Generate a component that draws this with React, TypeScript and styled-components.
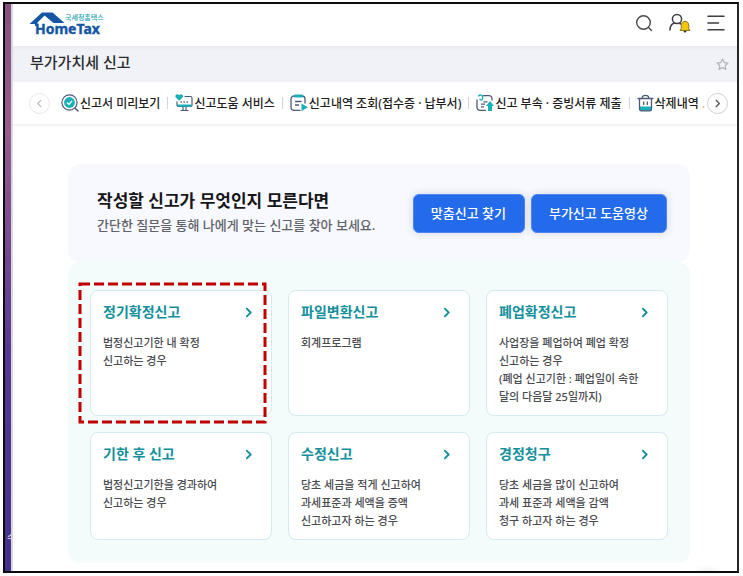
import React from "react";
import styled, { createGlobalStyle } from "styled-components";

const GlobalStyle = createGlobalStyle`
  *, *::before, *::after { box-sizing: border-box; }
  body {
    margin: 0;
    background: #fff;
    color: #222;
    font-family: "Noto Sans", "Noto Sans CJK KR", sans-serif;
  }
  h1, h2, h3, p, ul { margin: 0; padding: 0; }
  ul { list-style: none; }
  button { font-family: inherit; cursor: pointer; }
`;

const Page = styled.div`
  display: flex;
  min-height: 100vh;
  padding: 2px 4px 3px 3px;
`;

const Frame = styled.div`
  flex: 1;
  min-width: 0;
  display: flex;
  border: 2px solid #0c0c0e;
  border-right-color: #26272b;
`;

const Desktop = styled.div`
  position: relative;
  flex: none;
  width: 6px;
  overflow: hidden;
  background: linear-gradient(#86507f, #965c8c 22%, #724990 45%, #573795 62%, #43308a);
`;

const DesktopLabel = styled.span`
  position: absolute;
  left: 2px;
  bottom: 26px;
  font-size: 10px;
  line-height: 16px;
  color: #e4e0ee;
  white-space: nowrap;
`;

const Window = styled.div`
  position: relative;
  flex: 1;
  min-width: 0;
  border-left: 2px solid #d9d6df;
  background: #fff;
  overflow: hidden;
`;

const Header = styled.header`
  display: flex;
  align-items: center;
  justify-content: space-between;
  height: 42px;
  padding: 0 12px 4px 16px;
`;

const LogoLink = styled.a`
  display: block;
  height: 30px;
  text-decoration: none;
`;

const HeaderTools = styled.div`
  display: flex;
  align-items: center;
  gap: 16px;
`;

const IconButton = styled.button`
  display: flex;
  padding: 0;
  border: 0;
  background: none;
`;

const TitleBar = styled.div`
  display: flex;
  align-items: center;
  justify-content: space-between;
  height: 36px;
  padding: 0 8px 0 17px;
  background: linear-gradient(#e9ebf0, #f0f2f7 5px);
`;

const PageTitle = styled.h1`
  font-size: 15px;
  line-height: 22px;
  font-weight: 500;
  padding-bottom: 4px;
  color: #2a2a2e;
`;

const QuickNav = styled.nav`
  display: flex;
  align-items: center;
  height: 44px;
  padding: 0 9px 0 16px;
  border-bottom: 2px solid #f3f3f5;
`;

const RoundButton = styled.button<{ $muted?: boolean }>`
  flex: none;
  display: flex;
  align-items: center;
  justify-content: center;
  width: 21px;
  height: 21px;
  padding: 0;
  border-radius: 50%;
  border: 1px solid ${(p) => (p.$muted ? "#e8e8ea" : "#cfcfd3")};
  background: #fff;
  color: ${(p) => (p.$muted ? "#b9b9bd" : "#55555a")};
`;

const QuickList = styled.ul`
  flex: 1;
  min-width: 0;
  display: flex;
  overflow: hidden;
  padding-left: 11px;
`;

const QuickItem = styled.li`
  flex: none;
  display: flex;
  align-items: center;

  & + &::before {
    content: "";
    width: 1px;
    height: 12px;
    margin: 0 7px;
    background: #d4d4d8;
  }
`;

const QuickLink = styled.a`
  display: flex;
  align-items: center;
  gap: 1px;
  font-size: 12px;
  line-height: 20px;
  font-weight: 500;
  color: #1d1d20;
  text-decoration: none;
  white-space: nowrap;
`;

const QuickLabel = styled.span`
  padding-top: 2px;
`;

const Dot = styled.span`
  color: #f0b888;
`;

const Main = styled.main`
  padding: 38px 47px 8px 55px;
`;

const Banner = styled.section`
  display: flex;
  align-items: center;
  justify-content: space-between;
  min-height: 98px;
  padding: 0 23px 0 29px;
  border-radius: 12px;
  background: #f7f9ff;
`;

const BannerTitle = styled.h2`
  font-size: 17px;
  line-height: 24px;
  font-weight: 700;
  color: #17171a;
  white-space: nowrap;
`;

const BannerText = styled.p`
  font-size: 13px;
  line-height: 24px;
  font-weight: 500;
  color: #626368;
  white-space: nowrap;
`;

const BannerActions = styled.div`
  display: flex;
  gap: 6px;
`;

const PrimaryButton = styled.button`
  height: 39px;
  padding: 0 18px 2px 17px;
  border: 1px solid #4f85f0;
  border-radius: 6px;
  background: #246beb;
  box-shadow: 0 0 8px rgba(30, 40, 80, 0.16);
  color: #fff;
  font-size: 13px;
  font-weight: 500;
  white-space: nowrap;
`;

const Cards = styled.section`
  display: grid;
  grid-template-columns: repeat(3, minmax(0, 1fr));
  gap: 16px;
  padding: 28px 22px 23px;
  border-radius: 12px;
  background: #f3fbfb;
`;

const Card = styled.a`
  position: relative;
  display: block;
  padding: 11px 12px 9px;
  border: 1px solid #d3ebed;
  border-radius: 8px;
  background: #fff;
  text-decoration: none;
`;

const CardHead = styled.div`
  display: flex;
  align-items: center;
  justify-content: space-between;
  padding-right: 5px;
  margin-bottom: 12px;
  color: #13909c;
`;

const CardTitle = styled.h3`
  font-size: 14px;
  line-height: 20px;
  font-weight: 700;
`;

const CardText = styled.p`
  font-size: 11px;
  line-height: 18px;
  font-weight: 500;
  color: #4a4b50;
  white-space: pre-line;
`;

const Highlight = styled.span`
  position: absolute;
  inset: -7px 6px -7px -11px;

  svg {
    display: block;
    width: 100%;
    height: 100%;
    overflow: visible;
  }
`;

const FloatingShade = styled.div`
  position: absolute;
  right: 18px;
  bottom: -22px;
  width: 24px;
  height: 20px;
  border-radius: 50%;
  box-shadow: 0 0 8px rgba(0, 0, 0, 0.3);
`;

const Logo = () => (
  <svg width="78" height="30" viewBox="0 -1 78 30" role="img" aria-label="국세청홈택스 HomeTax">
    <path d="M0.500 15 13 3.500H23.500L35.500 14H24.500L15.500 6.500 8.500 13.500V17H6V15Z" fill="#1455a4" />
    <text x="36" y="11" fontSize="7" fontWeight="500" fill="#18a2b0" fontFamily="Noto Sans CJK KR, sans-serif">국세청홈택스</text>
    <text x="6" y="25" fontSize="14" fontWeight="700" fill="#1455a4" stroke="#1455a4" strokeWidth="0.400" fontFamily="Noto Sans, sans-serif">HomeTax</text>
  </svg>
);

const SearchIcon = () => (
  <svg width="18" height="18" viewBox="0 0 18 18" fill="none" stroke="#4a4a4e" strokeWidth="1.4" strokeLinecap="round">
    <circle cx="8.500" cy="8.500" r="6.800" />
    <path d="m13.500 13.500 3 3" />
  </svg>
);

const UserBellIcon = () => (
  <svg width="22" height="20" viewBox="0 0 22 20" fill="none">
    <circle cx="8" cy="6" r="4.600" stroke="#3d3d42" strokeWidth="1.500" />
    <path d="M1 17c0-3.800 1.800-6.200 4.500-7" stroke="#3d3d42" strokeWidth="1.500" strokeLinecap="round" />
    <path d="M10.500 10.500 12 11" stroke="#3d3d42" strokeWidth="1.500" />
    <path d="M16 8.300c-2.600 0-3.800 1.900-3.800 4.200v3.200L11 17.500h10l-1.200-1.800v-3.200c0-2.300-1.200-4.200-3.800-4.200Z" fill="#f5c50a" stroke="#6d5a14" strokeWidth="0.800" />
    <path d="M14.500 18h3a1.500 1.500 0 0 1-3 0Z" fill="#3d3520" />
  </svg>
);

const MenuIcon = () => (
  <svg width="18" height="16" viewBox="0 0 18 16" stroke="#3d3d42" strokeWidth="1.500" strokeLinecap="round">
    <path d="M1 1.200h16M1 8h10.500M1 14.800h16" />
  </svg>
);

const StarIcon = () => (
  <svg width="13" height="13" viewBox="0 0 24 24" fill="none" stroke="#b4b6bc" strokeWidth="2.400" strokeLinejoin="round">
    <path d="m12 2 3.100 6.300 6.900 1-5 4.900 1.200 6.900L12 17.800l-6.200 3.300L7 14.200 2 9.300l6.900-1Z" />
  </svg>
);

const Chevron = ({ size = 10, width = 1.6, left = false }: { size?: number; width?: number; left?: boolean }) => (
  <svg width={size} height={size} viewBox="0 0 10 10" fill="none" stroke="currentColor" strokeWidth={width} strokeLinecap="round" strokeLinejoin="round" aria-hidden="true">
    <path d={left ? "M6.500 1.500 3 5l3.500 3.500" : "M3.500 1.500 7 5 3.500 8.500"} />
  </svg>
);

const PreviewIcon = () => (
  <svg width="18" height="18" viewBox="0 0 18 18" fill="none" aria-hidden="true">
    <circle cx="8.500" cy="8.500" r="7.600" stroke="#505a78" strokeWidth="1.200" />
    <circle cx="8.500" cy="8.500" r="5.400" fill="#19b0ba" />
    <path d="m6 8.500 1.900 1.900 3.300-3.500" stroke="#fff" strokeWidth="1.300" />
    <path d="m14.200 14.200 2.800 2.800" stroke="#505a78" strokeWidth="1.600" strokeLinecap="round" />
  </svg>
);

const HelpIcon = () => (
  <svg width="18" height="18" viewBox="0 0 18 18" fill="none" aria-hidden="true">
    <path d="M9.500 2.500h6a1.500 1.500 0 0 1 1.500 1.500v7a1.500 1.500 0 0 1-1.500 1.500h-12A1.500 1.500 0 0 1 2 11V7.500" stroke="#505a78" strokeWidth="1.200" />
    <path d="M4.200 6.800.8 3.500C-.8 1.500 2.400-1.200 4.200 1.300 6-1.200 9.200 1.500 7.600 3.500Z" fill="#19b0ba" />
    <path d="M5.500 8h1.400m1.600 0h1.400m1.600 0h1.400" stroke="#505a78" strokeWidth="1.400" />
    <path d="M2 10.500h15v.5a1.800 1.800 0 0 1-1.800 1.800H3.800A1.800 1.800 0 0 1 2 11Z" fill="#19b0ba" />
    <path d="M8 13v3.300m3-3.300v3.300M5.500 16.500h8" stroke="#505a78" strokeWidth="1.200" />
  </svg>
);

const HistoryIcon = () => (
  <svg width="18" height="18" viewBox="0 0 18 18" fill="none" aria-hidden="true">
    <path d="M10.500 16.400H4A3 3 0 0 1 1 13.400V5a3 3 0 0 1 3-3h8a3 3 0 0 1 3 3v4.500" stroke="#505a78" strokeWidth="1.300" />
    <path d="M4.500.5h8L13 3.500H4Z" fill="#19b0ba" />
    <path d="M5 7.500h6.500M5 11h4" stroke="#505a78" strokeWidth="1.300" />
    <path d="m11.500 9.500 6.300 3.700-6.300 4Z" fill="#19b0ba" />
  </svg>
);

const AttachIcon = () => (
  <svg width="18" height="18" viewBox="0 0 18 18" fill="none" aria-hidden="true">
    <path d="M10 16.400H4a3 3 0 0 1-3-3V5.500M7 1.600h6a3 3 0 0 1 3 3v2" stroke="#505a78" strokeWidth="1.300" />
    <path d="M2.500 2.600C2.500.4 6.500.4 6.500 2.800v2c0 1.700-2.600 1.700-2.600 0" stroke="#19b0ba" strokeWidth="1.400" />
    <path d="M7.500 7.800h4M5 10.200h4M5 12.800h3" stroke="#505a78" strokeWidth="1.200" />
    <path d="m14 7 4 5h-2v5h-4v-5h-2Z" fill="#19b0ba" />
  </svg>
);

const TrashIcon = () => (
  <svg width="17" height="18" viewBox="0 0 17 18" fill="none" aria-hidden="true">
    <path d="M2.500 12.500h12l-.5 3a1.500 1.500 0 0 1-1.500 1.300h-8A1.500 1.500 0 0 1 3 15.500Z" fill="#19b0ba" />
    <path d="M1 4.500h15M2.500 4.500v10.300a2 2 0 0 0 2 2h8a2 2 0 0 0 2-2V4.500M5 4.500C5 .2 12 .2 12 4.500" stroke="#505a78" strokeWidth="1.300" strokeLinecap="round" />
    <path d="M6.700 7.500v3.500M10.300 7.500v3.500" stroke="#505a78" strokeWidth="1.300" />
  </svg>
);

const quickLinks = [
  { icon: <PreviewIcon />, label: "신고서 미리보기" },
  { icon: <HelpIcon />, label: "신고도움 서비스" },
  { icon: <HistoryIcon />, label: "신고내역 조회(접수증 · 납부서)" },
  { icon: <AttachIcon />, label: "신고 부속 · 증빙서류 제출" },
  { icon: <TrashIcon />, label: "삭제내역", more: true },
];

const cards = [
  { title: "정기확정신고", text: "법정신고기한 내 확정\n신고하는 경우", highlighted: true },
  { title: "파일변환신고", text: "회계프로그램" },
  { title: "폐업확정신고", text: "사업장을 폐업하여 폐업 확정\n신고하는 경우\n(폐업 신고기한 : 폐업일이 속한\n달의 다음달 25일까지)" },
  { title: "기한 후 신고", text: "법정신고기한을 경과하여\n신고하는 경우" },
  { title: "수정신고", text: "당초 세금을 적게 신고하여\n과세표준과 세액을 증액\n신고하고자 하는 경우" },
  { title: "경정청구", text: "당초 세금을 많이 신고하여\n과세 표준과 세액을 감액\n청구 하고자 하는 경우" },
];

export default function App() {
  return (
    <>
      <GlobalStyle />
      <Page>
        <Frame>
          <Desktop aria-hidden="true">
            <DesktopLabel>수</DesktopLabel>
          </Desktop>
          <Window>
            <Header>
              <LogoLink href="#home"><Logo /></LogoLink>
              <HeaderTools>
                <IconButton aria-label="검색"><SearchIcon /></IconButton>
                <IconButton aria-label="알림"><UserBellIcon /></IconButton>
                <IconButton aria-label="메뉴"><MenuIcon /></IconButton>
              </HeaderTools>
            </Header>
            <TitleBar>
              <PageTitle>부가가치세 신고</PageTitle>
              <IconButton aria-label="즐겨찾기"><StarIcon /></IconButton>
            </TitleBar>
            <QuickNav>
              <RoundButton $muted aria-label="이전"><Chevron left width={1.3} size={9} /></RoundButton>
              <QuickList>
                {quickLinks.map((q) => (
                  <QuickItem key={q.label}>
                    <QuickLink href="#quick">
                      {q.icon}
                      <QuickLabel>{q.label}{q.more && <Dot> .</Dot>}</QuickLabel>
                    </QuickLink>
                  </QuickItem>
                ))}
              </QuickList>
              <RoundButton aria-label="다음"><Chevron width={1.5} size={9} /></RoundButton>
            </QuickNav>
            <Main>
              <Banner>
                <div>
                  <BannerTitle>작성할 신고가 무엇인지 모른다면</BannerTitle>
                  <BannerText>간단한 질문을 통해 나에게 맞는 신고를 찾아 보세요.</BannerText>
                </div>
                <BannerActions>
                  <PrimaryButton>맞춤신고 찾기</PrimaryButton>
                  <PrimaryButton>부가신고 도움영상</PrimaryButton>
                </BannerActions>
              </Banner>
              <Cards>
                {cards.map((c) => (
                  <Card href="#report" key={c.title}>
                    <CardHead>
                      <CardTitle>{c.title}</CardTitle>
                      <Chevron size={11} width={1.7} />
                    </CardHead>
                    <CardText>{c.text}</CardText>
                    {c.highlighted && (
                      <Highlight>
                        <svg aria-hidden="true">
                          <rect width="100%" height="100%" fill="none" stroke="#c00000" strokeWidth="3" strokeDasharray="10 4" />
                        </svg>
                      </Highlight>
                    )}
                  </Card>
                ))}
              </Cards>
            </Main>
            <FloatingShade />
          </Window>
        </Frame>
      </Page>
    </>
  );
}
